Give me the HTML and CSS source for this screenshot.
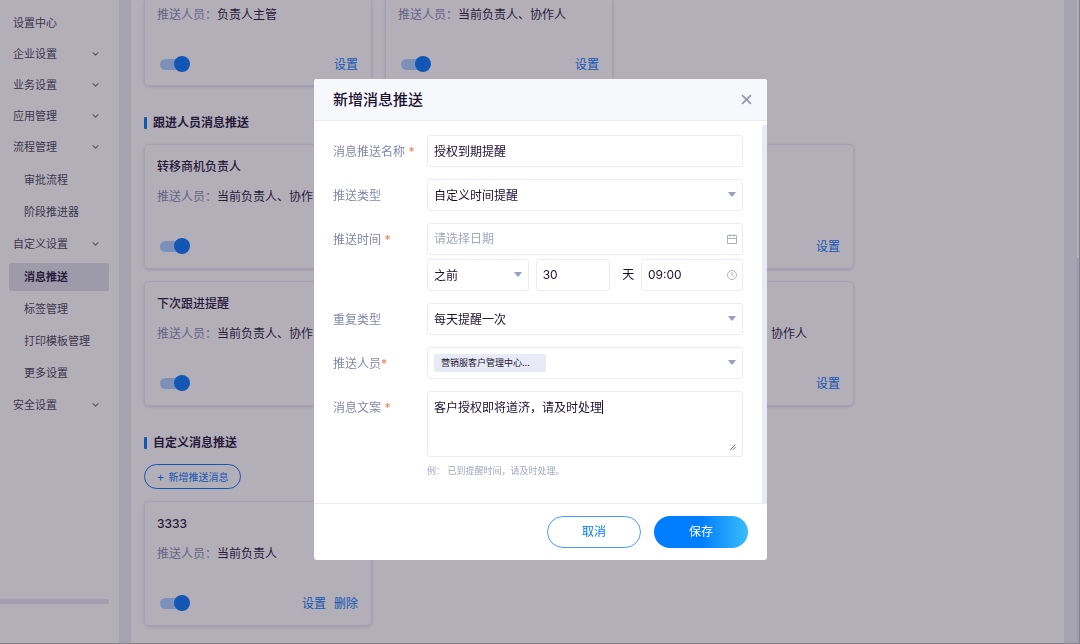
FILE: index.html
```html
<!DOCTYPE html>
<html lang="zh-CN">
<head>
<meta charset="utf-8">
<meta name="viewport" content="width=device-width, initial-scale=1">
<title>消息推送</title>
<link rel="stylesheet" href="styles.css">
</head>
<body>
<svg class="sprite" aria-hidden="true">
  <symbol id="chevron" viewBox="0 0 8 8"><path d="M1.500 3 4 5.500 6.500 3" fill="none" stroke="currentColor" stroke-width=".9"/></symbol>
  <symbol id="caret" viewBox="0 0 8 5"><path d="M0 0h8L4.600 4.600h-1.200z" fill="currentColor"/></symbol>
</svg>
<div class="page">
  <nav class="sidebar" aria-label="设置">
    <a class="nav-item" href="#">设置中心</a>
    <a class="nav-item" href="#">企业设置<svg class="chevron"><use href="#chevron"/></svg></a>
    <a class="nav-item" href="#">业务设置<svg class="chevron"><use href="#chevron"/></svg></a>
    <a class="nav-item" href="#">应用管理<svg class="chevron"><use href="#chevron"/></svg></a>
    <a class="nav-item" href="#">流程管理<svg class="chevron"><use href="#chevron"/></svg></a>
    <div class="nav-sub">
      <a class="nav-subitem" href="#">审批流程</a>
      <a class="nav-subitem" href="#">阶段推进器</a>
    </div>
    <a class="nav-item" href="#">自定义设置<svg class="chevron"><use href="#chevron"/></svg></a>
    <div class="nav-sub">
      <a class="nav-subitem is-active" href="#" aria-current="page">消息推送</a>
      <a class="nav-subitem" href="#">标签管理</a>
      <a class="nav-subitem" href="#">打印模板管理</a>
      <a class="nav-subitem" href="#">更多设置</a>
    </div>
    <a class="nav-item" href="#">安全设置<svg class="chevron"><use href="#chevron"/></svg></a>
    <div class="sidebar-scroll"></div>
  </nav>

  <main class="main">
    <div class="cards">
      <article class="card card-clipped">
        <p class="card-text"><span class="muted">推送人员：</span>负责人主管</p>
        <div class="card-foot"><input class="switch" type="checkbox" checked aria-label="启用"><a class="link" href="#">设置</a></div>
      </article>
      <article class="card card-clipped">
        <p class="card-text"><span class="muted">推送人员：</span>当前负责人、协作人</p>
        <div class="card-foot"><input class="switch" type="checkbox" checked aria-label="启用"><a class="link" href="#">设置</a></div>
      </article>
    </div>

    <h2 class="section-title">跟进人员消息推送</h2>
    <div class="cards">
      <article class="card">
        <h3 class="card-title">转移商机负责人</h3>
        <p class="card-text"><span class="muted">推送人员：</span>当前负责人、协作人</p>
        <div class="card-foot"><input class="switch" type="checkbox" checked aria-label="启用"></div>
      </article>
      <article class="card"></article>
      <article class="card">
        <div class="card-foot"><a class="link" href="#">设置</a></div>
      </article>
      <article class="card">
        <h3 class="card-title">下次跟进提醒</h3>
        <p class="card-text"><span class="muted">推送人员：</span>当前负责人、协作人</p>
        <div class="card-foot"><input class="switch" type="checkbox" checked aria-label="启用"></div>
      </article>
      <article class="card"></article>
      <article class="card">
        <h3 class="card-title"></h3>
        <p class="card-text"><span class="muted">推送人员：</span>当前负责人、协作人</p>
        <div class="card-foot"><a class="link" href="#">设置</a></div>
      </article>
    </div>

    <h2 class="section-title">自定义消息推送</h2>
    <button class="add" type="button"><span class="plus">+</span><span>新增推送消息</span></button>
    <div class="cards">
      <article class="card">
        <h3 class="card-title">3333</h3>
        <p class="card-text"><span class="muted">推送人员：</span>当前负责人</p>
        <div class="card-foot"><input class="switch" type="checkbox" checked aria-label="启用"><a class="link" href="#">设置</a><a class="link" href="#">删除</a></div>
      </article>
    </div>
  </main>
  <div class="page-scroll"><div class="page-scroll-thumb"></div></div>
</div>

<div class="overlay">
  <section class="modal" role="dialog" aria-modal="true" aria-labelledby="dialog-title">
    <header class="modal-head">
      <h1 class="modal-title" id="dialog-title">新增消息推送</h1>
      <button class="close" type="button" aria-label="关闭"><svg viewBox="0 0 10 10"><path d="M1 1l8 8M9 1 1 9" fill="none" stroke="currentColor" stroke-width="1.600"/></svg></button>
    </header>
    <div class="modal-body">
      <form class="form" id="push-form">
        <label class="label" for="name">消息推送名称 <span class="star">*</span></label>
        <input class="control" id="name" type="text" value="授权到期提醒">

        <label class="label" for="type">推送类型</label>
        <div class="field"><select class="control" id="type"><option>自定义时间提醒</option></select><svg class="caret"><use href="#caret"/></svg></div>

        <label class="label" for="date">推送时间 <span class="star">*</span></label>
        <div class="stack">
          <div class="field"><input class="control" id="date" type="text" placeholder="请选择日期"><svg class="field-icon" viewBox="0 0 10 10"><path d="M.5 1.500h9v8h-9zM.5 4.500h9M3 0v2.500M7 0v2.500" fill="none" stroke="currentColor"/></svg></div>
          <div class="time-row">
            <div class="field field-wide"><select class="control" aria-label="之前或之后"><option>之前</option></select><svg class="caret"><use href="#caret"/></svg></div>
            <div class="field field-days"><input class="control" id="days" type="text" value="30"></div>
            <label class="unit" for="days">天</label>
            <div class="field field-wide"><input class="control" type="text" value="09:00" aria-label="时间"><svg class="field-icon" viewBox="0 0 10 10"><circle cx="5" cy="5" r="4.500" fill="none" stroke="currentColor"/><path d="M5 2.300V5l2 1.300" fill="none" stroke="currentColor"/></svg></div>
          </div>
        </div>

        <label class="label" for="repeat">重复类型</label>
        <div class="field"><select class="control" id="repeat"><option>每天提醒一次</option></select><svg class="caret"><use href="#caret"/></svg></div>

        <label class="label" for="people">推送人员<span class="star">*</span></label>
        <div class="field"><button class="control picker" id="people" type="button"><span class="tag">营销服客户管理中心...</span></button><svg class="caret"><use href="#caret"/></svg></div>

        <label class="label" for="copy">消息文案 <span class="star">*</span></label>
        <div>
          <div class="field">
            <textarea class="control area" id="copy">客户授权即将道济，请及时处理</textarea>
            <span class="text-cursor"></span>
            <svg class="grip" viewBox="0 0 6 6"><path d="M.3 5.700 5.300.7M3 5.700 5.500 3.200" fill="none" stroke="currentColor" stroke-width=".9"/></svg>
          </div>
          <p class="hint">例： 已到提醒时间，请及时处理。</p>
        </div>
      </form>
      <div class="modal-scroll"></div>
    </div>
    <footer class="modal-foot">
      <button class="btn btn-outline" type="button">取消</button>
      <button class="btn btn-primary" type="submit" form="push-form">保存</button>
    </footer>
  </section>
</div>
</body>
</html>
```

FILE: styles.css
```css
:root {
  --ink: #1c1033;
  --muted: #8387ad;
  --faint: #a3a6c4;
  --line: #ebebf7;
  --blue: #007eff;
  --page-blue: #0070f5;
}
* { box-sizing: border-box; }
body {
  margin: 0;
  font: 12px/18px Inter, "Noto Sans CJK SC", sans-serif;
  color: var(--ink);
}
h1, h2, h3, p { margin: 0; font-size: 12px; font-weight: 500; }
a { text-decoration: none; }
input, select, textarea, button { font: inherit; color: inherit; }
.sprite { position: absolute; width: 0; height: 0; }

.page {
  display: flex;
  height: 100vh;
  overflow: hidden;
  background: #e9eef3;
  border-right: 1px solid #b5b5bb;
  border-bottom: 1px solid #b5b5bb;
}
.sidebar {
  display: flex;
  flex-direction: column;
  flex: 0 0 119px;
  padding: 7px 10px 39px 0;
  background: #fff;
  font-size: 11px;
}
.nav-item {
  display: flex;
  align-items: center;
  justify-content: space-between;
  height: 31px;
  padding: 0 9px 0 13px;
  color: #40404f;
}
.chevron { width: 9px; height: 9px; color: #70707e; }
.nav-sub { display: grid; gap: 4px; padding: 4px 0 2px 9px; }
.nav-subitem {
  display: flex;
  align-items: center;
  height: 28px;
  padding-left: 15px;
  border-radius: 2px;
  color: #40404f;
}
.nav-subitem.is-active { background: #dedfe6; color: var(--ink); font-weight: 700; }
.sidebar-scroll { height: 5px; margin-top: auto; border-radius: 0 3px 3px 0; background: #e6e5f3; }

.main {
  flex: 1;
  margin: 0 13px 0 12px;
  padding: 0 13px;
  overflow: hidden;
  background: #fff;
}
.cards {
  display: grid;
  grid-template-columns: repeat(auto-fill, 228px);
  max-width: 720px;
  gap: 12px 13px;
}
.card {
  display: flex;
  flex-direction: column;
  gap: 12px;
  min-height: 125px;
  padding: 13px 13px 12px 12px;
  border: 1px solid #ebe9f5;
  border-radius: 5px;
  box-shadow: 0 1px 3px #dcd8e8;
}
.card-clipped { min-height: 0; padding-top: 6px; padding-bottom: 11px; border-top: 0; border-radius: 0 0 5px 5px; }
.card-title { min-height: 18px; }
.card-text { font-weight: 400; white-space: nowrap; }
.muted { color: var(--muted); }
.card-foot {
  display: flex;
  align-items: center;
  justify-content: flex-end;
  gap: 8px;
  min-height: 18px;
  margin-top: auto;
}
.card-clipped .card-foot { margin-top: 20px; }
.link { color: var(--page-blue); }
.switch {
  appearance: none;
  position: relative;
  width: 26px;
  height: 11px;
  margin: 0 auto 2px 3px;
  border-radius: 6px;
  background: #a6cfff;
}
.switch::before {
  content: "";
  position: absolute;
  top: -3px;
  right: -4px;
  width: 16px;
  height: 16px;
  border-radius: 50%;
  background: var(--page-blue);
}
.section-title { display: flex; align-items: center; gap: 6px; margin: 28px 0 12px; font-weight: 700; }
.section-title::before { content: ""; width: 3px; height: 12px; border-radius: 1px; background: var(--page-blue); }
.add {
  display: flex;
  align-items: center;
  justify-content: center;
  gap: 4px;
  width: 97px;
  height: 25px;
  margin-bottom: 12px;
  padding: 0;
  border: 1px solid var(--page-blue);
  border-radius: 13px;
  background: none;
  color: var(--page-blue);
  font-size: 10px;
}
.plus { font-size: 12px; }
.page-scroll { width: 2px; padding-top: 258px; background: #fff; }
.page-scroll-thumb { height: 100%; background: #e3def3; }

.overlay {
  position: fixed;
  inset: 0;
  display: grid;
  place-items: center;
  padding: 0 0 6px 1px;
  background: rgba(53, 45, 71, .38);
}
.modal {
  width: 453px;
  border-radius: 3px;
  overflow: hidden;
  background: #fff;
}
.modal-head {
  display: flex;
  align-items: center;
  justify-content: space-between;
  height: 42px;
  padding: 0 15px 0 19px;
  border-bottom: 1px solid var(--line);
  background: #f6f8fc;
}
.modal-title { padding-top: 1px; font-size: 15px; }
.close { display: flex; padding: 0; border: 0; background: none; color: #9498bd; }
.close svg { width: 11px; height: 11px; }
.modal-body { display: flex; justify-content: space-between; }
.form {
  display: grid;
  grid-template-columns: 94px 1fr;
  flex: 1;
  gap: 12px 0;
  padding: 14px 19px 23px;
}
.label { padding-top: 1px; line-height: 32px; height: 32px; color: var(--muted); }
.star { color: #ff7a4d; }
.field { position: relative; }
.stack { display: grid; gap: 4px; }
.time-row { display: flex; align-items: center; justify-content: space-between; }
.field-wide { width: 102px; }
.field-days { width: 74px; }
.unit { margin: 0 0 0 6px; }
.control {
  appearance: none;
  display: block;
  width: 100%;
  height: 32px;
  margin: 0;
  padding: 0 6px;
  border: 1px solid var(--line);
  border-radius: 3px;
  outline: none;
  background: #fff;
}
select.control { padding-top: 2px; }
.control::placeholder { color: var(--faint); opacity: 1; }
.picker { display: flex; align-items: center; }
.area { height: 66px; padding: 7px 6px; resize: none; }
.tag { width: 112px; padding: 0 7px; border-radius: 2px; background: #e8eaf6; font-size: 9px; text-align: left; }
.caret { position: absolute; top: 13px; right: 7px; width: 8px; height: 5px; color: #9a9ec3; pointer-events: none; }
.field-icon { position: absolute; top: 11px; right: 6px; width: 10px; height: 10px; color: #adb0cc; }
.text-cursor { position: absolute; top: 9px; left: 175px; width: 1px; height: 14px; background: var(--ink); }
.grip { position: absolute; right: 7px; bottom: 7px; width: 6px; height: 6px; color: #555; }
.hint { margin-top: 5px; font-size: 9px; font-weight: 400; color: var(--faint); white-space: pre; }
.modal-scroll { width: 5px; margin-top: 4px; border-radius: 2px 0 0 0; background: #e8eaf6; }
.modal-foot {
  display: flex;
  justify-content: flex-end;
  gap: 13px;
  padding: 12px 19px;
  border-top: 1px solid var(--line);
}
.btn { width: 94px; height: 32px; padding: 0; border: 0; border-radius: 16px; }
.btn-outline { border: 1px solid #4a9fff; background: #fff; color: var(--blue); }
.btn-primary { background: linear-gradient(90deg, #007eff 50%, #3abdf9); color: #fff; }
```
